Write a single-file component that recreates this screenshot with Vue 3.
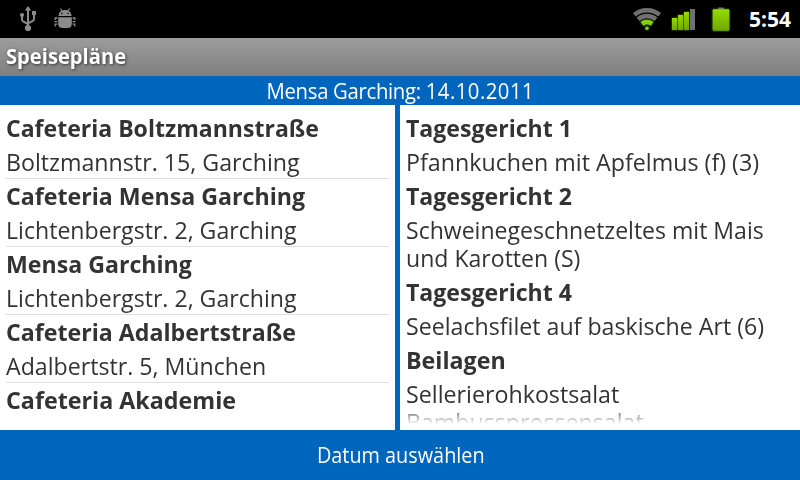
<script setup>
const cafeterias = [
  { name: 'Cafeteria Boltzmannstraße', nameScale: 0.96, address: 'Boltzmannstr. 15, Garching', addressScale: 0.967 },
  { name: 'Cafeteria Mensa Garching', nameScale: 0.966, address: 'Lichtenbergstr. 2, Garching', addressScale: 0.963 },
  { name: 'Mensa Garching', nameScale: 0.964, address: 'Lichtenbergstr. 2, Garching', addressScale: 0.963 },
  { name: 'Cafeteria Adalbertstraße', nameScale: 0.966, address: 'Adalbertstr. 5, München', addressScale: 0.965 },
  { name: 'Cafeteria Akademie', nameScale: 0.97, address: '', addressScale: 1 },
]

const menu = [
  { title: 'Tagesgericht 1', scale: 0.962, dishes: [{ text: 'Pfannkuchen mit Apfelmus (f) (3)', scale: 0.968 }] },
  {
    title: 'Tagesgericht 2',
    scale: 0.962,
    dishes: [
      { text: 'Schweinegeschnetzeltes mit Mais', scale: 0.96 },
      { text: 'und Karotten (S)', scale: 0.961 },
    ],
  },
  { title: 'Tagesgericht 4', scale: 0.962, dishes: [{ text: 'Seelachsfilet auf baskische Art (6)', scale: 0.965 }] },
  {
    title: 'Beilagen',
    scale: 0.968,
    dishes: [
      { text: 'Sellerierohkostsalat', scale: 0.968 },
      { text: 'Bambussprossensalat', scale: 0.966 },
    ],
  },
]

const condensed = (scale) => ({ transform: `scaleX(${scale})` })
</script>

<template>
  <div class="screen">
    <header class="status">
      <div class="notifications">
        <svg class="usb" width="18" height="28" viewBox="0 0 18 28">
          <g fill="none" stroke="#8b8b8b" stroke-width="2">
            <path d="M9 5V23M3 11V14.500Q3 16 4.500 16.700L9 19M15 9V14Q15 15.500 13.500 16.200L9 18.300" />
          </g>
          <path d="M9 1L12.300 5.500H5.700Z" fill="#8b8b8b" />
          <circle cx="9" cy="23" r="3.100" fill="#8b8b8b" />
          <circle cx="3" cy="10" r="2.100" fill="#8b8b8b" />
          <rect x="13" y="6" width="4" height="4" fill="#8b8b8b" />
        </svg>
        <svg class="droid" width="22" height="22" viewBox="0 0 22 22">
          <g fill="#8b8b8b">
            <path d="M4.500 8C4.500 4.500 7.200 2 11 2S17.500 4.500 17.500 8Z" />
            <path d="M4.200 9.300H17.800V15.500Q17.800 20 13.500 20H8.500Q4.200 20 4.200 15.500Z" />
          </g>
          <g fill="none" stroke="#8b8b8b" stroke-width="1.300">
            <path d="M8 3L6.500 .5M14 3L15.500 .5" />
            <path d="M3.400 10H1.200V12M3.400 13.600H.5M3.400 16.200H1.200V18.500M18.600 10H20.800V12M18.600 13.600H21.500M18.600 16.200H20.800V18.500" />
          </g>
          <circle cx="8" cy="5.500" r=".8" />
          <circle cx="14" cy="5.500" r=".8" />
        </svg>
      </div>
      <div class="system">
        <svg class="wifi" width="30" height="25" viewBox="0 0 30 25">
          <g fill="none" stroke="#707070">
            <path stroke-width="4.400" d="M2.300 7.800A19.800 19.800 0 0 1 27.700 7.800" />
            <path stroke-width="4.400" d="M6 12.300A14.100 14.100 0 0 1 24 12.300" />
          </g>
          <g class="glow">
            <path fill="none" stroke="#84d200" stroke-width="4.800" d="M10 16.900A8 8 0 0 1 20 16.900" />
            <circle cx="15" cy="21.300" r="1.700" fill="#84d200" />
          </g>
        </svg>
        <svg class="signal" width="25" height="24" viewBox="0 0 25 24">
          <defs>
            <linearGradient id="green" x1="0" y1="0" x2="0" y2="1">
              <stop offset="0" stop-color="#94dc00" />
              <stop offset="1" stop-color="#6fa500" />
            </linearGradient>
          </defs>
          <g class="glow" fill="url(#green)">
            <rect x="1" y="11" width="5" height="12" />
            <rect x="7" y="8" width="5" height="15" />
            <rect x="13" y="5" width="5" height="18" />
          </g>
          <rect x="19" y="2" width="5" height="21" fill="#707070" />
        </svg>
        <svg class="battery" width="20" height="26" viewBox="0 0 20 26">
          <path d="M7 3.500V2.500Q7 1.500 8 1.500H12Q13 1.500 13 2.500V3.500Z" fill="#777" />
          <rect class="glow" x="1.700" y="3.300" width="16.600" height="21.500" rx="1" fill="url(#green)" />
        </svg>
        <span class="clock">5:54</span>
      </div>
    </header>
    <div class="titlebar"><span>Speisepläne</span></div>
    <div class="subtitle">
      <div class="heading"><span class="place">Mensa Garching: </span><span class="date">14.10.2011</span></div>
    </div>
    <main class="panes">
      <section class="pane">
        <article v-for="(c, i) in cafeterias" :key="i" class="cafeteria">
          <h2 :style="condensed(c.nameScale)">{{ c.name }}</h2>
          <p v-if="c.address" :style="condensed(c.addressScale)">{{ c.address }}</p>
        </article>
      </section>
      <section class="pane">
        <div class="fade">
          <article v-for="m in menu" :key="m.title" class="course">
            <h2 :style="condensed(m.scale)">{{ m.title }}</h2>
            <p v-for="d in m.dishes" :key="d.text" :style="condensed(d.scale)">{{ d.text }}</p>
          </article>
        </div>
      </section>
    </main>
    <button class="date-button"><span>Datum auswählen</span></button>
  </div>
</template>

<style>
body {
  margin: 0;
  background: #000;
}
</style>

<style scoped>
.screen {
  display: flex;
  flex-direction: column;
  width: 800px;
  height: 480px;
  overflow: hidden;
  background: #0065bd;
  font-family: 'Open Sans', 'Noto Sans', sans-serif;
  color: #333;
}
.status {
  display: flex;
  justify-content: space-between;
  height: 38px;
  background: #000;
}
.notifications {
  display: flex;
  padding: 5px 0 0 19px;
}
.droid {
  margin: 3px 0 0 17px;
}
.system {
  display: flex;
  padding: 7px 9px 0 0;
}
.signal {
  margin-left: 9px;
}
.battery {
  margin-left: 15px;
  margin-top: -1px;
}
.glow {
  filter: drop-shadow(0 0 1px #5c9400);
}
.clock {
  margin-left: 18px;
  font-size: 21px;
  line-height: 25px;
  font-weight: 700;
  color: #fff;
}
.titlebar {
  height: 38px;
  padding-left: 6px;
  box-sizing: border-box;
  background: linear-gradient(#9c9c9c, #7f7f7f);
  color: #fff;
  font-size: 21px;
  line-height: 37px;
  font-weight: 700;
  text-shadow: 1px 1px 3px #333;
}
.titlebar span {
  display: inline-block;
  transform: scaleX(0.96);
  transform-origin: 0 50%;
}
.subtitle {
  height: 29px;
  color: #fff;
  font-size: 21px;
  line-height: 30px;
  text-align: center;
}
.heading {
  display: inline-block;
  transform: scaleX(0.967);
}
.place {
  letter-spacing: -0.32px;
}
.date {
  letter-spacing: 0.5px;
}
.panes {
  display: grid;
  grid-template-columns: 395px 400px;
  gap: 5px;
  height: 325px;
}
.pane {
  box-sizing: border-box;
  height: 325px;
  padding: 6px;
  background: #fff;
  overflow: hidden;
}
h2,
p {
  width: max-content;
  margin: 0;
  font-size: 24px;
  line-height: 28px;
  white-space: nowrap;
  transform-origin: 0 50%;
}
h2 {
  font-weight: 700;
  padding: 3px 0;
}
p {
  font-weight: 400;
}
.cafeteria {
  height: 67px;
  border-bottom: 1px solid #e0e0e0;
}
.cafeteria:last-child {
  border-bottom: 0;
}
.cafeteria p,
.course h2 + p {
  padding-top: 3px;
}
.course {
  padding-bottom: 3px;
}
.fade {
  height: 313px;
  overflow: hidden;
  mask-image: linear-gradient(#000 295px, transparent 313px);
}
.date-button {
  height: 50px;
  border: 0;
  padding: 0 0 0 2px;
  background: #0065bd;
  color: #fff;
  font-family: inherit;
  font-size: 21px;
  line-height: 50px;
}
.date-button span {
  display: inline-block;
  transform: scaleX(0.945);
}
</style>
